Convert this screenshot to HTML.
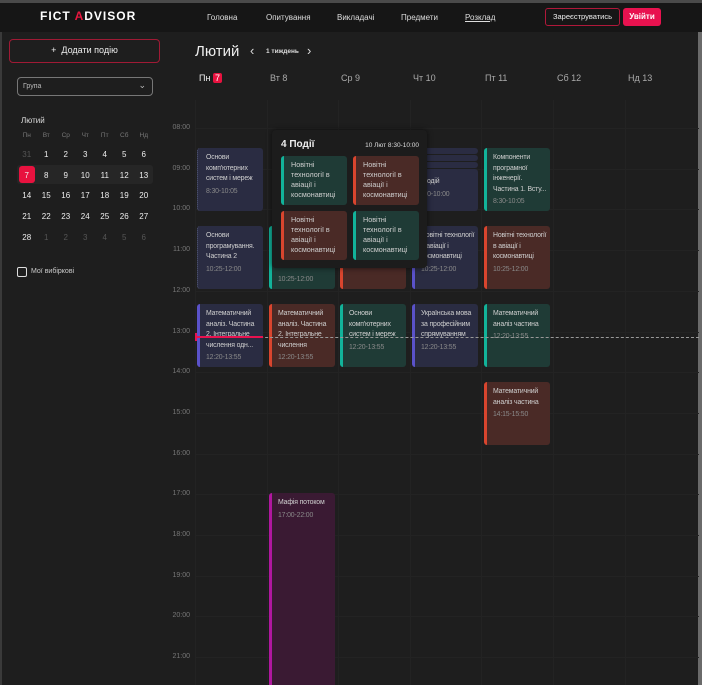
<!DOCTYPE html>
<html><head><meta charset="utf-8"><style>
*{box-sizing:border-box;margin:0;padding:0}
body{width:702px;height:685px;overflow:hidden;background:#1e1e1e;font-family:"Liberation Sans",sans-serif;color:#ddd;position:relative}
.a{position:absolute}
.hdr{left:0;top:0;width:702px;height:32px;background:#161616;border-top:3px solid #4a4a4a}
.nav{font-size:8px;color:#ddd;top:13px}
.ev{position:absolute;border-radius:3px;padding:5px 3px 0 6px;font-size:6.9px;line-height:10.6px;letter-spacing:-0.15px;color:#cfcfcf;overflow:hidden}
.ev .t{color:#8a8a8a;margin-top:2px}
.pp .ev{font-size:7.2px;line-height:10px;padding:4px 6px 0 7px;letter-spacing:0}
.bl{background:#2a2c42}.bl.b{border-left:3px solid #5a52c9}.bl.d{border-left:1px dotted #555a7a;padding-left:8px}
.te{background:#1f3b36;border-left:3px solid #12b39a}
.re{background:#4a2a26;border-left:3px solid #d9452e}
.tl{position:absolute;left:160px;width:30px;text-align:right;font-size:7px;color:#777}
.hl{position:absolute;left:195px;width:504px;height:1px;background:#232323}
.vl{position:absolute;top:100px;width:1px;height:585px;background:#232323}
.dh{position:absolute;top:73px;font-size:9px;color:#aaa}
.cal{font-size:8px;text-align:center;width:19.5px;position:absolute}
</style></head><body>
<div class="a" style="left:0;top:0;width:2px;height:685px;background:#3a3a3a"></div>
<div class="a" style="left:698px;top:0;width:4px;height:685px;background:#6a6a6a"></div>
<div class="a hdr"></div>
<div class="a" style="left:40px;top:9px;font-size:12px;font-weight:bold;color:#fff;letter-spacing:1px">F<span>I</span>CT <span style="color:#e8173f">A</span>DVISOR</div>
<div class="a nav" style="left:207px">Головна</div>
<div class="a nav" style="left:266px">Опитування</div>
<div class="a nav" style="left:337px">Викладачі</div>
<div class="a nav" style="left:401px">Предмети</div>
<div class="a nav" style="left:465px;text-decoration:underline">Розклад</div>
<div class="a" style="left:545px;top:8px;width:75px;height:18px;border:1.5px solid #b0183a;border-radius:3px;font-size:7.5px;color:#eee;text-align:center;line-height:15px">Зареєструватись</div>
<div class="a" style="left:623px;top:8px;width:38px;height:18px;background:#e8124f;border-radius:3px;font-size:8px;font-weight:bold;color:#fff;text-align:center;line-height:18px">Увійти</div>

<div class="a" style="left:9px;top:39px;width:151px;height:24px;border:1.5px solid #a01a35;border-radius:4px;font-size:9px;color:#eee;text-align:center;line-height:21px">+&nbsp;&nbsp;Додати подію</div>
<div class="a" style="left:17px;top:77px;width:136px;height:19px;border:1px solid #777;border-radius:4px;font-size:7px;color:#bbb;padding-left:5px;line-height:17px">Група<span style="position:absolute;right:6px;top:-1px;font-size:9px">⌄</span></div>
<div class="a" style="left:21px;top:116px;font-size:8px;color:#ddd">Лютий</div>
<div class="a" style="left:17px;top:165px;width:136px;height:19px;background:#262626;border-radius:3px"></div>
<div class="a" style="left:19px;top:166px;width:16px;height:17px;background:#e8123f;border-radius:3px"></div>
<div id="cal"></div>
<div class="a" style="left:17px;top:267px;width:10px;height:10px;border:1.5px solid #ddd;border-radius:2px"></div>
<div class="a" style="left:31px;top:268px;font-size:7px;color:#ccc">Мої вибіркові</div>

<div class="a" style="left:195px;top:43px;font-size:15px;color:#eee">Лютий</div>
<div class="a" style="left:250px;top:43px;font-size:13px;color:#ddd">‹</div>
<div class="a" style="left:266px;top:48px;font-size:6.5px;color:#ddd;font-weight:bold">1 тиждень</div>
<div class="a" style="left:307px;top:43px;font-size:13px;color:#ddd">›</div>
<div class="dh" style="left:199px;color:#eee">Пн <span style="background:#e8123f;color:#fff;padding:0 2px;border-radius:2px">7</span></div>
<div class="dh" style="left:270px">Вт 8</div><div class="dh" style="left:341px">Ср 9</div>
<div class="dh" style="left:413px">Чт 10</div><div class="dh" style="left:485px">Пт 11</div>
<div class="dh" style="left:557px">Сб 12</div><div class="dh" style="left:628px">Нд 13</div>
<div id="grid"></div>

<div class="ev bl d" style="left:197px;top:148px;width:66px;height:63px">Основи комп'ютерних систем і мереж<div class="t">8:30-10:05</div></div>
<div class="ev bl d" style="left:197px;top:226px;width:66px;height:63px">Основи програмування. Частина 2<div class="t">10:25-12:00</div></div>
<div class="ev bl b" style="left:197px;top:304px;width:66px;height:63px">Математичний аналіз. Частина 2. Інтегральне числення одн...<div class="t">12:20-13:55</div></div>
<div class="ev te" style="left:269px;top:226px;width:66px;height:63px"><br><br><br><br><div class="t">10:25-12:00</div></div>
<div class="ev re" style="left:269px;top:304px;width:66px;height:63px">Математичний аналіз. Частина 2. Інтегральне числення<div class="t">12:20-13:55</div></div>
<div class="ev" style="left:269px;top:493px;width:66px;height:192px;background:#3a1a33;border-left:3px solid #b0179f;border-radius:3px 3px 0 0">Мафія потоком<div class="t">17:00-22:00</div></div>
<div class="ev re" style="left:340px;top:226px;width:66px;height:63px"></div>
<div class="ev te" style="left:340px;top:304px;width:66px;height:63px">Основи комп'ютерних систем і мереж<div class="t">12:20-13:55</div></div>
<div class="ev bl" style="left:412px;top:148px;width:66px;height:6px"></div>
<div class="ev bl" style="left:412px;top:155px;width:66px;height:6px"></div>
<div class="ev bl" style="left:412px;top:162px;width:66px;height:6px"></div>
<div class="ev bl" style="left:412px;top:169px;width:66px;height:42px;padding-top:8px">4 подій<div class="t">8:30-10:00</div></div>
<div class="ev bl b" style="left:412px;top:226px;width:66px;height:63px">Новітні технології в авіації і космонавтиці<div class="t">10:25-12:00</div></div>
<div class="ev bl b" style="left:412px;top:304px;width:66px;height:63px">Українська мова за професійним спрямуванням<div class="t">12:20-13:55</div></div>
<div class="ev te" style="left:484px;top:148px;width:66px;height:63px">Компоненти програмної інженерії. Частина 1. Всту...<div class="t">8:30-10:05</div></div>
<div class="ev re" style="left:484px;top:226px;width:66px;height:63px">Новітні технології в авіації і космонавтиці<div class="t">10:25-12:00</div></div>
<div class="ev te" style="left:484px;top:304px;width:66px;height:63px">Математичний аналіз частина<div class="t">12:20-13:55</div></div>
<div class="ev re" style="left:484px;top:382px;width:66px;height:63px">Математичний аналіз частина<div class="t">14:15-15:50</div></div>

<div class="a" style="left:195px;top:337px;width:504px;height:0;border-top:1px dashed #999"></div>
<div class="a" style="left:195px;top:336px;width:68px;height:2px;background:#e8124f"></div>
<div class="a" style="left:195px;top:333px;width:2px;height:8px;background:#e8124f"></div>

<div class="a pp" style="left:272px;top:130px;width:155px;height:138px;background:#1c1c1c;border-radius:4px;box-shadow:0 0 6px rgba(0,0,0,.6)">
<div class="a" style="left:9px;top:9px;font-size:10px;font-weight:bold;color:#eee">4 Події</div>
<div class="a" style="right:8px;top:12px;font-size:6.5px;color:#ddd">10 Лют 8:30-10:00</div>
<div class="ev te" style="left:9px;top:26px;width:66px;height:49px">Новітні<br>технології в<br>авіації і<br>космонавтиці</div>
<div class="ev re" style="left:81px;top:26px;width:66px;height:49px">Новітні<br>технології в<br>авіації і<br>космонавтиці</div>
<div class="ev re" style="left:9px;top:81px;width:66px;height:49px">Новітні<br>технології в<br>авіації і<br>космонавтиці</div>
<div class="ev te" style="left:81px;top:81px;width:66px;height:49px">Новітні<br>технології в<br>авіації і<br>космонавтиці</div>
</div>
<script>
var g='',c='';
var hrs=['08:00','09:00','10:00','11:00','12:00','13:00','14:00','15:00','16:00','17:00','18:00','19:00','20:00','21:00'];
hrs.forEach(function(h,i){var y=128+i*40.7;g+='<div class="hl" style="top:'+Math.round(y)+'px"></div><div class="tl" style="top:'+Math.round(y-4)+'px">'+h+'</div>';});
for(var i=0;i<7;i++)g+='<div class="vl" style="left:'+Math.round(195+i*71.6)+'px"></div>';
document.getElementById('grid').innerHTML=g;
var d=['Пн','Вт','Ср','Чт','Пт','Сб','Нд'];
d.forEach(function(x,i){c+='<div class="cal" style="left:'+(17+i*19.5)+'px;top:132px;font-size:6.5px;color:#777">'+x+'</div>';});
var rows=[[31,1,2,3,4,5,6],[7,8,9,10,11,12,13],[14,15,16,17,18,19,20],[21,22,23,24,25,26,27],[28,1,2,3,4,5,6]];
rows.forEach(function(r,ri){r.forEach(function(n,i){var dim=(ri==0&&i==0)||(ri==4&&i>0);c+='<div class="cal" style="left:'+(17+i*19.5)+'px;top:'+(150+ri*20.7)+'px;color:'+(dim?'#555':'#eee')+'">'+n+'</div>';});});
document.getElementById('cal').innerHTML=c;
</script>
</body></html>
